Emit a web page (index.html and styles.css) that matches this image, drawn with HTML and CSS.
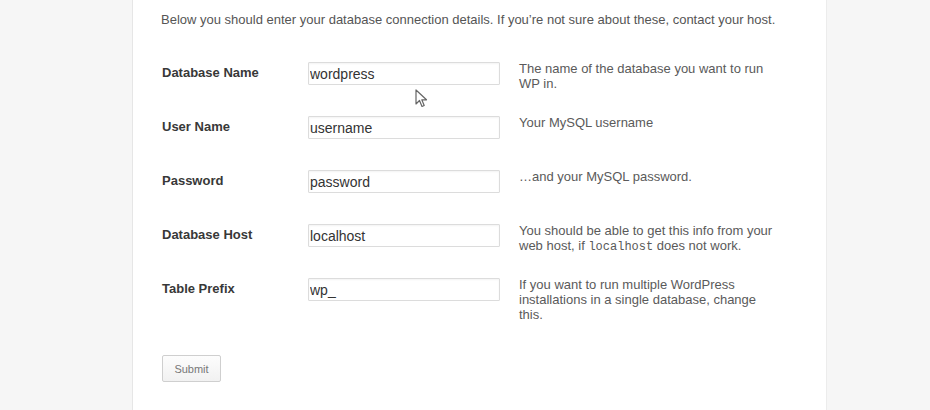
FILE: index.html
```html
<!DOCTYPE html>
<html lang="en">
<head>
    <meta charset="UTF-8">
    <meta name="viewport" content="width=device-width, initial-scale=1.0">
    <title>WordPress Setup Configuration</title>
    <link rel="stylesheet" href="styles.css">
</head>
<body>
    <div class="page">
        <p class="intro">Below you should enter your database connection details. If you&#8217;re not sure about these, contact your host.</p>

        <form class="setup-form">
            <!-- Database name -->
            <label class="field-label" for="dbname">Database Name</label>
            <input class="field-input" id="dbname" type="text" value="wordpress">
            <p class="field-desc">The name of the database you want to run WP in.</p>

            <!-- User name -->
            <label class="field-label" for="uname">User Name</label>
            <input class="field-input" id="uname" type="text" value="username">
            <p class="field-desc">Your MySQL username</p>

            <!-- Password -->
            <label class="field-label" for="pwd">Password</label>
            <input class="field-input" id="pwd" type="text" value="password">
            <p class="field-desc">&hellip;and your MySQL password.</p>

            <!-- Host -->
            <label class="field-label" for="dbhost">Database Host</label>
            <input class="field-input" id="dbhost" type="text" value="localhost">
            <p class="field-desc">You should be able to get this info from your web host, if <code>localhost</code> does not work.</p>

            <!-- Prefix -->
            <label class="field-label" for="prefix">Table Prefix</label>
            <input class="field-input" id="prefix" type="text" value="wp_">
            <p class="field-desc">If you want to run multiple WordPress installations in a single database, change this.</p>
        </form>

        <button class="submit-btn" type="button">Submit</button>

        <!-- Mouse pointer from the recording -->
        <svg class="cursor" width="13" height="19" viewBox="0 0 13 19">
            <path d="M1 1 L1 15 L4.5 11.5 L7 17.5 L9.2 16.5 L6.8 10.8 L11.5 10.8 Z" fill="#fff" stroke="#666" stroke-width="1.2" stroke-linejoin="round"/>
        </svg>
    </div>
</body>
</html>
```

FILE: styles.css
```css
/* Setup page */
body {
    margin: 0;
    padding: 0;
    background-color: #f6f6f6;
    font-family: "Liberation Sans", Arial, sans-serif;
    color: #444;
}
.page {
    position: relative;
    box-sizing: border-box;
    width: 695px;
    height: 410px;
    margin-left: 132px;
    padding: 12px 0 0 28px;
    background-color: #fff;
    border-left: 1px solid #e6e6e6;
    border-right: 1px solid #ececec;
}
.intro {
    margin: 0;
    font-size: 13px;
    line-height: 16px;
    color: #555;
}
.setup-form {
    display: grid;
    grid-template-columns: 128px 192px 262px;
    grid-auto-rows: 54px;
    column-gap: 19px;
    margin-top: 34px;
}
.field-label {
    font-size: 13px;
    font-weight: bold;
    line-height: 22px;
    color: #383838;
    padding-left: 1px;
}
.field-input {
    box-sizing: border-box;
    width: 192px;
    height: 23px;
    margin: 0;
    padding: 2px 1px;
    border: 1px solid #dcdcdc;
    border-radius: 1px;
    box-shadow: inset 0 1px 2px rgba(0, 0, 0, 0.05);
    font-family: "Liberation Sans", Arial, sans-serif;
    font-size: 14px;
    color: #333;
    background-color: #fff;
}
.field-desc {
    margin: -1px 0 0;
    font-size: 13px;
    line-height: 15px;
    color: #5a5a5a;
}
.field-desc code {
    font-family: "Liberation Mono", "Courier New", monospace;
    font-size: 12px;
    line-height: 1;
}
.submit-btn {
    margin-top: 23px;
    margin-left: 1px;
    width: 59px;
    height: 27px;
    padding: 0;
    border: 1px solid #cfcfcf;
    border-radius: 2px;
    background: linear-gradient(#fdfdfd, #f1f1f1);
    font-family: "Liberation Sans", Arial, sans-serif;
    font-size: 11px;
    color: #777;
}
.cursor {
    position: absolute;
    left: 282px;
    top: 89px;
}
```
